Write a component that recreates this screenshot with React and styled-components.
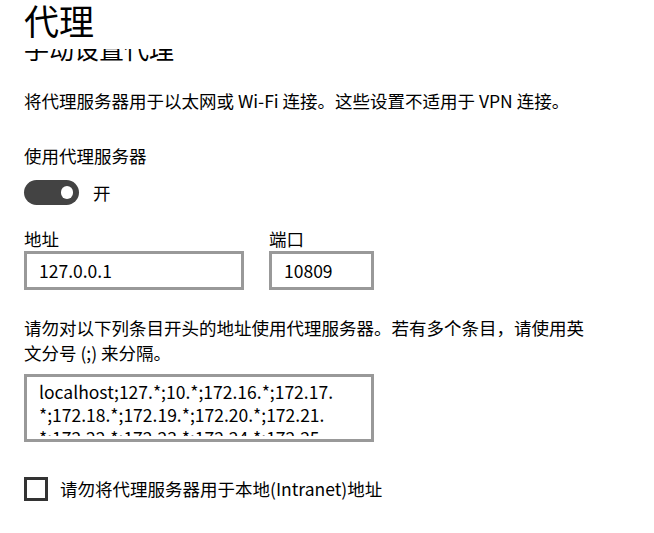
import React, { useLayoutEffect, useRef } from "react";
import styled, { createGlobalStyle } from "styled-components";

const GlobalStyle = createGlobalStyle`
  html, body {
    margin: 0;
    padding: 0;
    background: #ffffff;
  }
  body {
    font-family: "Noto Sans CJK SC", "Noto Sans", sans-serif;
    color: #000000;
  }
  * { box-sizing: border-box; }
`;

const Page = styled.div`
  width: 654px;
  height: 533px;
  display: flex;
  flex-direction: column;
  background: #ffffff;
  overflow: hidden;
`;

const Header = styled.header`
  flex: 0 0 49px;
  padding-left: 24px;
  background: #ffffff;
`;

const Title = styled.h1`
  margin: 0;
  font-size: 35px;
  line-height: 39px;
  font-weight: 400;
`;

const ScrollArea = styled.div`
  flex: 1 1 auto;
  overflow: hidden;
`;

const Content = styled.div`
  padding: 12px 0 60px 24px;
  display: flex;
  flex-direction: column;
  align-items: flex-start;
`;

const SubTitle = styled.h2`
  margin: 0;
  font-size: 25px;
  line-height: 33px;
  font-weight: 400;
`;

const Text = styled.p`
  margin: ${(p) => p.$mt || 0}px 0 0 0;
  max-width: 570px;
  font-size: 17.5px;
  line-height: 25px;
`;

const ToggleRow = styled.div`
  margin-top: 12px;
  display: flex;
  align-items: center;
  gap: 14px;
  height: 25px;
`;

const Track = styled.div`
  width: 55px;
  height: 25px;
  border-radius: 12.5px;
  background: #434343;
  display: flex;
  align-items: center;
  justify-content: ${(p) => (p.$on ? "flex-end" : "flex-start")};
  padding: 0 6px;
`;

const Knob = styled.span`
  width: 12.5px;
  height: 12.5px;
  border-radius: 50%;
  background: #ffffff;
`;

const ToggleLabel = styled.span`
  font-size: 17.5px;
  line-height: 25px;
`;

const FieldsRow = styled.div`
  margin-top: 21px;
  display: flex;
  gap: 25px;
`;

const FieldGroup = styled.div`
  display: flex;
  flex-direction: column;
`;

const FieldLabel = styled.label`
  font-size: 17.5px;
  line-height: 25px;
`;

const Input = styled.input`
  width: ${(p) => p.$w}px;
  height: 39px;
  margin: 0;
  padding: 0 12px;
  border: 3px solid #999999;
  border-radius: 0;
  background: #ffffff;
  font-family: "Noto Sans CJK SC", "Noto Sans", sans-serif;
  font-size: 17.5px;
  color: #000000;
  outline: none;
`;

const TextBox = styled.div`
  margin-top: 9px;
  width: 350px;
  height: 68px;
  padding: 3px 8px 0 12px;
  border: 3px solid #999999;
  background: #ffffff;
  font-size: 17.5px;
  line-height: 23px;
`;

const TextBoxViewport = styled.div`
  height: 56px;
  overflow: hidden;
  word-break: keep-all;
`;

const CheckRow = styled.label`
  margin-top: 34px;
  display: flex;
  align-items: center;
  gap: 12px;
`;

const Box = styled.span`
  width: 24px;
  height: 24px;
  border: 3px solid #333333;
  background: #ffffff;
`;

const CheckText = styled.span`
  font-size: 17.5px;
  line-height: 25px;
`;

const bypass =
  "localhost;127.*;10.*;172.16.*;172.17.*;172.18.*;172.19.*;172.20.*;172.21.*;172.22.*;172.23.*;172.24.*;172.25.*;172.26.*;172.27.*;172.28.*;172.29.*;172.30.*;172.31.*;192.168.*";

function BypassText({ value }) {
  const parts = value.split(".*");
  return (
    <>
      {parts.map((part, i) => (
        <React.Fragment key={i}>
          {i > 0 && "*"}
          {part}
          {i < parts.length - 1 && (
            <>
              .<wbr />
            </>
          )}
        </React.Fragment>
      ))}
    </>
  );
}

export default function App() {
  const scrollRef = useRef(null);
  useLayoutEffect(() => {
    if (scrollRef.current) scrollRef.current.scrollTop = 29;
  }, []);

  return (
    <>
      <GlobalStyle />
      <Page>
        <Header>
          <Title>代理</Title>
        </Header>
        <ScrollArea ref={scrollRef}>
          <Content>
            <SubTitle>手动设置代理</SubTitle>
            <Text $mt={23}>
              将代理服务器用于以太网或 Wi-Fi 连接。这些设置不适用于 VPN 连接。
            </Text>
            <Text $mt={30}>使用代理服务器</Text>
            <ToggleRow>
              <Track $on>
                <Knob />
              </Track>
              <ToggleLabel>开</ToggleLabel>
            </ToggleRow>
            <FieldsRow>
              <FieldGroup>
                <FieldLabel>地址</FieldLabel>
                <Input $w={220} readOnly value="127.0.0.1" />
              </FieldGroup>
              <FieldGroup>
                <FieldLabel>端口</FieldLabel>
                <Input $w={105} readOnly value="10809" />
              </FieldGroup>
            </FieldsRow>
            <Text $mt={25}>
              请勿对以下列条目开头的地址使用代理服务器。若有多个条目，请使用英文分号 (;) 来分隔。
            </Text>
            <TextBox role="textbox">
              <TextBoxViewport>
                <BypassText value={bypass} />
              </TextBoxViewport>
            </TextBox>
            <CheckRow>
              <Box />
              <CheckText>请勿将代理服务器用于本地(Intranet)地址</CheckText>
            </CheckRow>
          </Content>
        </ScrollArea>
      </Page>
    </>
  );
}
